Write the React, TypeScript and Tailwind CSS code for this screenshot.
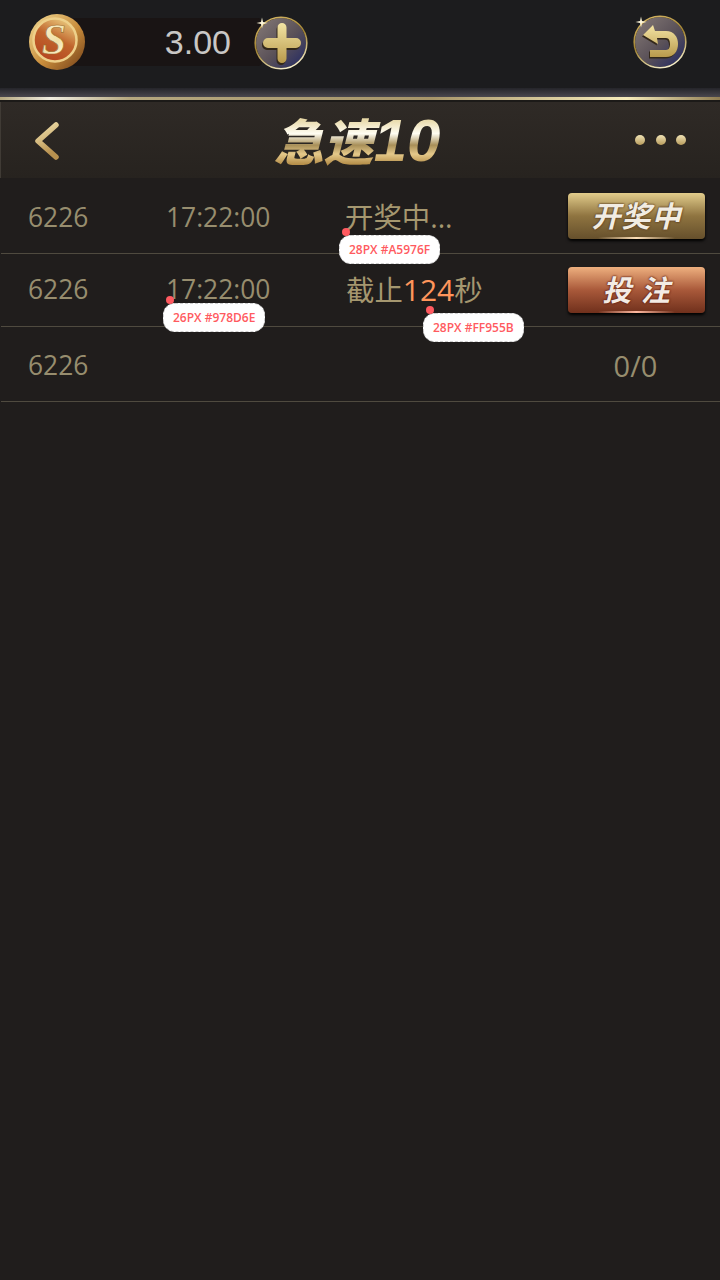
import React from "react";

const Note = ({ text, className }: { text: string; className: string }) => (
  <div className={`absolute z-20 ${className}`}>
    <span className="absolute left-[3px] top-[-7px] h-[8px] w-[8px] rounded-full bg-[#ff5a60]" />
    <div className="flex h-[29px] items-center whitespace-nowrap rounded-[12px] border border-dashed border-[#cfcfcf] bg-white px-[9px] text-[12px] font-semibold text-[#ff5a60]">
      {text}
    </div>
  </div>
);

const RoundBtn = ({ children, gid }: { children: React.ReactNode; gid: string }) => (
  <svg width="54" height="54" viewBox="0 0 54 54" className="relative z-10 shrink-0">
    <defs>
      <linearGradient id={gid} x1="0.1" y1="0.1" x2="0.9" y2="0.9">
        <stop offset="0" stopColor="#7f7472" />
        <stop offset="0.55" stopColor="#5a5158" />
        <stop offset="1" stopColor="#2b2f62" />
      </linearGradient>
      <linearGradient id={`${gid}r`} x1="0.2" y1="0" x2="0.6" y2="1">
        <stop offset="0" stopColor="#d8b866" />
        <stop offset="0.5" stopColor="#a08232" />
        <stop offset="1" stopColor="#f6eecb" />
      </linearGradient>
      <linearGradient id={`${gid}g`} x1="0" y1="0" x2="0" y2="1">
        <stop offset="0" stopColor="#f3e4a4" />
        <stop offset="1" stopColor="#b99a4c" />
      </linearGradient>
    </defs>
    <circle cx="27" cy="27" r="25.5" fill={`url(#${gid})`} stroke="#14120f" strokeWidth="1" />
    <circle cx="27" cy="27" r="25.8" fill="none" stroke={`url(#${gid}r)`} strokeWidth="1.6" />
    {children}
    <path d="M8 1.5 L9 6 L13.5 7 L9 8 L8 12.5 L7 8 L2.5 7 L7 6 Z" fill="#fff8dc" />
  </svg>
);

const Row = ({ children, h }: { children: React.ReactNode; h: string }) => (
  <div className={`relative ml-px flex items-center border-b border-[#4f4a3f] ${h}`}>{children}</div>
);

const PLUS = "M23.5 11.5 a4.5 4.5 0 0 1 9 0 V22 H42 a5 5 0 0 1 0 10 H32.5 v10.5 a4.5 4.5 0 0 1 -9 0 V32 H14 a5 5 0 0 1 0 -10 H23.5 Z";
const BACK = "M10 20 L20 10 L22 16 H33 C41 16 45 22 45 29 C45 36 41 42 33 42 H17 V35 H33 C36 35 37 32 37 29 C37 26 36 23 33 23 H24 L25 29 Z";

export default function App() {
  return (
    <div
      className="flex h-[1280px] w-[720px] flex-col overflow-hidden bg-[#201d1c] text-[#978d6e]"
      style={{ fontFamily: '"Open Sans", "Noto Sans CJK SC", sans-serif' }}
    >
      <header className="flex h-[88px] items-start justify-between bg-[#1c1c1e] pl-[29px] pr-[33px] pt-[14px]">
        <div className="flex items-center">
          <svg width="56" height="56" viewBox="0 0 56 56" className="relative z-10 shrink-0">
            <defs>
              <linearGradient id="coinEdge" x1="0" y1="0" x2="1" y2="1">
                <stop offset="0" stopColor="#f2dc97" />
                <stop offset="0.55" stopColor="#c98d3c" />
                <stop offset="1" stopColor="#6f3c16" />
              </linearGradient>
              <linearGradient id="coinFace" x1="0.7" y1="0" x2="0.2" y2="1">
                <stop offset="0" stopColor="#e9c87c" />
                <stop offset="0.45" stopColor="#c0642c" />
                <stop offset="1" stopColor="#b4421f" />
              </linearGradient>
              <linearGradient id="coinS" x1="0.2" y1="0" x2="0.7" y2="1">
                <stop offset="0" stopColor="#fbf3d2" />
                <stop offset="0.6" stopColor="#f0dfa6" />
                <stop offset="1" stopColor="#fff9e6" />
              </linearGradient>
            </defs>
            <circle cx="28" cy="28" r="28" fill="url(#coinEdge)" />
            <circle cx="26" cy="26" r="21.5" fill="url(#coinFace)" stroke="#eed08a" strokeWidth="2.5" />
            <text x="25" y="40" textAnchor="middle" fontSize="44" fontWeight="700" fontStyle="italic" fontFamily="'Liberation Serif', serif" fill="url(#coinS)" stroke="#9c6a2a" strokeWidth="0.6">S</text>
          </svg>
          <div className="-ml-[15px] flex h-[48px] w-[192px] items-center justify-end rounded-[4px] bg-[#191414] pr-[31px] text-[34px] text-[#c9c7c5]" style={{ fontFamily: '"Liberation Sans", sans-serif' }}>
            3.00
          </div>
          <div className="-ml-[8px] mt-[1px]">
            <RoundBtn gid="plus">
              <path d={PLUS} fill="#33281a" transform="translate(-1 2)" />
              <path d={PLUS} fill="url(#plusg)" />
            </RoundBtn>
          </div>
        </div>
        <div className="mt-[1px]">
          <RoundBtn gid="back">
            <path d={BACK} fill="#33281a" transform="translate(-1 1.5)" />
            <path d={BACK} fill="url(#backg)" />
          </RoundBtn>
        </div>
      </header>

      <div className="h-[9px] bg-gradient-to-b from-[#25252a] to-[#4a474e]" />
      <div className="h-[3px] bg-[linear-gradient(90deg,#b5a77f_0%,#f0ece0_7%,#b5a77f_18%,#a8966a_60%,#f6ebbb_87%,#8f7c52_100%)]" />
      <div className="h-[2px] bg-[#1c1a18]" />

      <div className="grid h-[76px] grid-cols-[1fr_auto_1fr] items-center border-l border-[#403b35] bg-gradient-to-b from-[#2f2a26] to-[#27231f] pl-[33px] pr-[34px]">
        <svg width="26" height="38" viewBox="0 0 26 38" className="mt-[1px]">
          <defs>
            <linearGradient id="chev" x1="0" y1="0" x2="0.3" y2="1">
              <stop offset="0" stopColor="#f1e2ae" />
              <stop offset="1" stopColor="#b8914f" />
            </linearGradient>
          </defs>
          <path d="M22 3 L4 19 L22 35" fill="none" stroke="url(#chev)" strokeWidth="5.5" strokeLinecap="round" strokeLinejoin="round" />
        </svg>
        <div
          className="whitespace-nowrap bg-[linear-gradient(180deg,#e8d9a8_18%,#fffdf2_40%,#a88f58_58%,#e5c98a_72%,#b58e49_88%)] bg-clip-text pr-[6px] text-[50px] font-black italic leading-[62px] text-transparent"
          style={{ fontFamily: '"Noto Sans CJK SC", "Liberation Sans", sans-serif' }}
        >
          急速<span style={{ fontFamily: '"Liberation Sans", sans-serif' }} className="text-[60px] font-bold">10</span>
        </div>
        <div className="flex justify-end gap-[10.5px]">
          <span className="h-[10px] w-[10px] rounded-full bg-gradient-to-b from-[#f0e3b5] to-[#b89c5c]" />
          <span className="h-[10px] w-[10px] rounded-full bg-gradient-to-b from-[#f0e3b5] to-[#b89c5c]" />
          <span className="h-[10px] w-[10px] rounded-full bg-gradient-to-b from-[#f0e3b5] to-[#b89c5c]" />
        </div>
      </div>

      <div className="mt-[2px] flex flex-col">
        <Row h="h-[74px]">
          <span className="mt-[2px] w-[165px] pl-[27px] text-[26.4px]">6226</span>
          <span className="mt-[2px] w-[179px] text-[26.4px]">17:22:00</span>
          <span className="mt-[2px] w-[223px] text-[28.4px] text-[#a5976f]">开奖中...</span>
          <div className="relative mb-[2px] flex h-[46px] w-[137px] items-center justify-center overflow-hidden rounded-[4px] bg-gradient-to-b from-[#e2cd8c] via-[#8f7440] to-[#66502c] text-[29px] font-bold italic tracking-[1px] text-[#f1ece2] shadow-[0_2px_3px_#000]" style={{ textShadow: "0 0 2px #5a3a1c, 0 0 2px #5a3a1c" }}>
            开奖中
            <span className="absolute bottom-0 left-[30px] h-[2px] w-[77px] rounded-full bg-gradient-to-r from-transparent via-[#ffe0b8] to-transparent" />
          </div>
          <Note text="28PX #A5976F" className="left-[338px] top-[55px]" />
        </Row>
        <Row h="h-[73px]">
          <span className="w-[165px] pl-[27px] text-[26.4px]">6226</span>
          <span className="w-[180px] text-[26.4px]">17:22:00</span>
          <span className="mb-[2px] w-[222px] text-[28.4px] text-[#a5976f]">
            截止<span className="text-[30px] text-[#ff955b]">124</span>秒
          </span>
          <div className="relative flex h-[46px] w-[137px] items-center justify-center overflow-hidden rounded-[4px] bg-gradient-to-b from-[#eeb07f] via-[#a9593a] to-[#70301c] text-[29px] font-bold italic tracking-[1px] text-[#f3ebe4] shadow-[0_2px_3px_#000]" style={{ textShadow: "0 0 2px #5e1e10, 0 0 2px #5e1e10" }}>
            投&nbsp;注
            <span className="absolute bottom-0 left-[30px] h-[2px] w-[77px] rounded-full bg-gradient-to-r from-transparent via-[#ffb9a0] to-transparent" />
          </div>
          <Note text="26PX #978D6E" className="left-[162px] top-[49px]" />
          <Note text="28PX #FF955B" className="left-[422px] top-[59px]" />
        </Row>
        <Row h="h-[75px]">
          <span className="mt-[4px] w-[566px] pl-[27px] text-[26.4px]">6226</span>
          <span className="mt-[4px] w-[137px] text-center text-[29px]">0/0</span>
        </Row>
      </div>
    </div>
  );
}
